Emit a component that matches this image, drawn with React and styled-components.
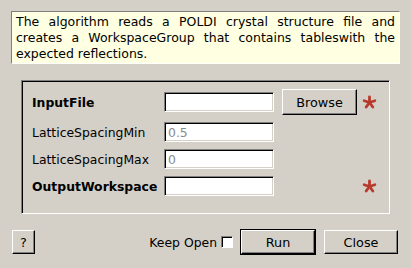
import styled, { createGlobalStyle } from "styled-components";

const GlobalStyle = createGlobalStyle`
  html, body {
    margin: 0;
    padding: 0;
    background: #d4d0c8;
    font-family: "DejaVu Sans", "Liberation Sans", sans-serif;
    font-size: 12.4px;
    color: #000;
  }
`;

const Dialog = styled.div`
  box-sizing: border-box;
  width: 411px;
  height: 268px;
  padding: 11px 11px 12px 11px;
  display: flex;
  flex-direction: column;
`;

const Description = styled.div`
  box-sizing: border-box;
  height: 53px;
  padding: 2px 4px 0 4px;
  background: #ffffe1;
  border: 1px solid;
  border-color: #808080 #ffffff #ffffff #808080;
  text-align: justify;
  font-size: 12.5px;
  line-height: 16px;
`;

const GroupBox = styled.div`
  box-sizing: border-box;
  margin: 16px 10px 0 10px;
  height: 134px;
  padding: 8px 0 0 10px;
  border: 1px solid;
  border-color: #808080 #ffffff #ffffff #808080;
  box-shadow: inset 1px 1px 0 #000;
  display: grid;
  grid-template-columns: 132px 110px 83px 21px;
  grid-auto-rows: auto;
  row-gap: 7px;
  align-items: center;
  align-content: start;
`;

const Label = styled.div`
  font-weight: ${({ $required }) => ($required ? "bold" : "normal")};
  white-space: nowrap;
`;

const Field = styled.input`
  box-sizing: border-box;
  width: 110px;
  height: 20px;
  margin: 0;
  padding: 0 3px;
  font: inherit;
  color: #000;
  background: #fff;
  border: 1px solid;
  border-color: #808080 #ffffff #ffffff #808080;
  box-shadow: inset 1px 1px 0 #000, inset -1px -1px 0 #d4d0c8;
  outline: none;

  &::placeholder {
    color: #8a8a8a;
  }
`;

const Button = styled.button`
  box-sizing: border-box;
  width: ${({ $w }) => $w}px;
  height: ${({ $h = 24 }) => $h}px;
  margin: 0;
  padding: 0;
  font: inherit;
  font-size: 12.8px;
  color: #000;
  background: #d4d0c8;
  border: 1px solid;
  border-color: #ffffff #000 #000 #ffffff;
  box-shadow: inset -1px -1px 0 #808080
    ${({ $default }) => ($default ? ", 0 0 0 1px #000" : "")};
  cursor: pointer;
`;

const BrowseButton = styled(Button)`
  width: 75px;
  margin-left: 8px;
`;

const StarCell = styled.div`
  display: flex;
  padding-left: 5px;
  align-items: center;
`;

const Footer = styled.div`
  margin-top: 16px;
  padding: 0 2px 0 1px;
  display: flex;
  align-items: center;
`;

const Spacer = styled.div`
  flex: 1;
`;

const KeepOpen = styled.label`
  display: flex;
  align-items: center;
  gap: 4px;
  margin-right: 8px;
`;

const Check = styled.span`
  box-sizing: border-box;
  width: 12px;
  height: 12px;
  background: #fff;
  border: 1px solid;
  border-color: #808080 #ffffff #ffffff #808080;
  box-shadow: inset 1px 1px 0 #000;
`;

const Star = () => (
  <svg width="15" height="15" viewBox="-8 -8 16 16">
    <g stroke="#b83a2c" strokeWidth="3" strokeLinecap="round">
      {[90, 18, 162, 234, 306].map((a) => (
        <line
          key={a}
          x1="0"
          y1="0"
          x2={(6 * Math.cos((a * Math.PI) / 180)).toFixed(2)}
          y2={(-6 * Math.sin((a * Math.PI) / 180)).toFixed(2)}
        />
      ))}
    </g>
  </svg>
);

const App = () => {
  return (
    <>
      <GlobalStyle />
      <Dialog>
        <Description>
          The algorithm reads a POLDI crystal structure file and creates a
          WorkspaceGroup that contains tableswith the expected reflections.
        </Description>

        <GroupBox>
          <Label $required>InputFile</Label>
          <Field />
          <BrowseButton $h={26}>Browse</BrowseButton>
          <StarCell><Star /></StarCell>

          <Label>LatticeSpacingMin</Label>
          <Field placeholder="0.5" />
          <div />
          <div />

          <Label>LatticeSpacingMax</Label>
          <Field placeholder="0" />
          <div />
          <div />

          <Label $required>OutputWorkspace</Label>
          <Field />
          <div />
          <StarCell><Star /></StarCell>
        </GroupBox>

        <Footer>
          <Button $w={23}>?</Button>
          <Spacer />
          <KeepOpen>
            Keep Open <Check />
          </KeepOpen>
          <Button $w={74} $default>Run</Button>
          <Button $w={74} style={{ marginLeft: 9 }}>Close</Button>
        </Footer>
      </Dialog>
    </>
  );
};

export default App;
